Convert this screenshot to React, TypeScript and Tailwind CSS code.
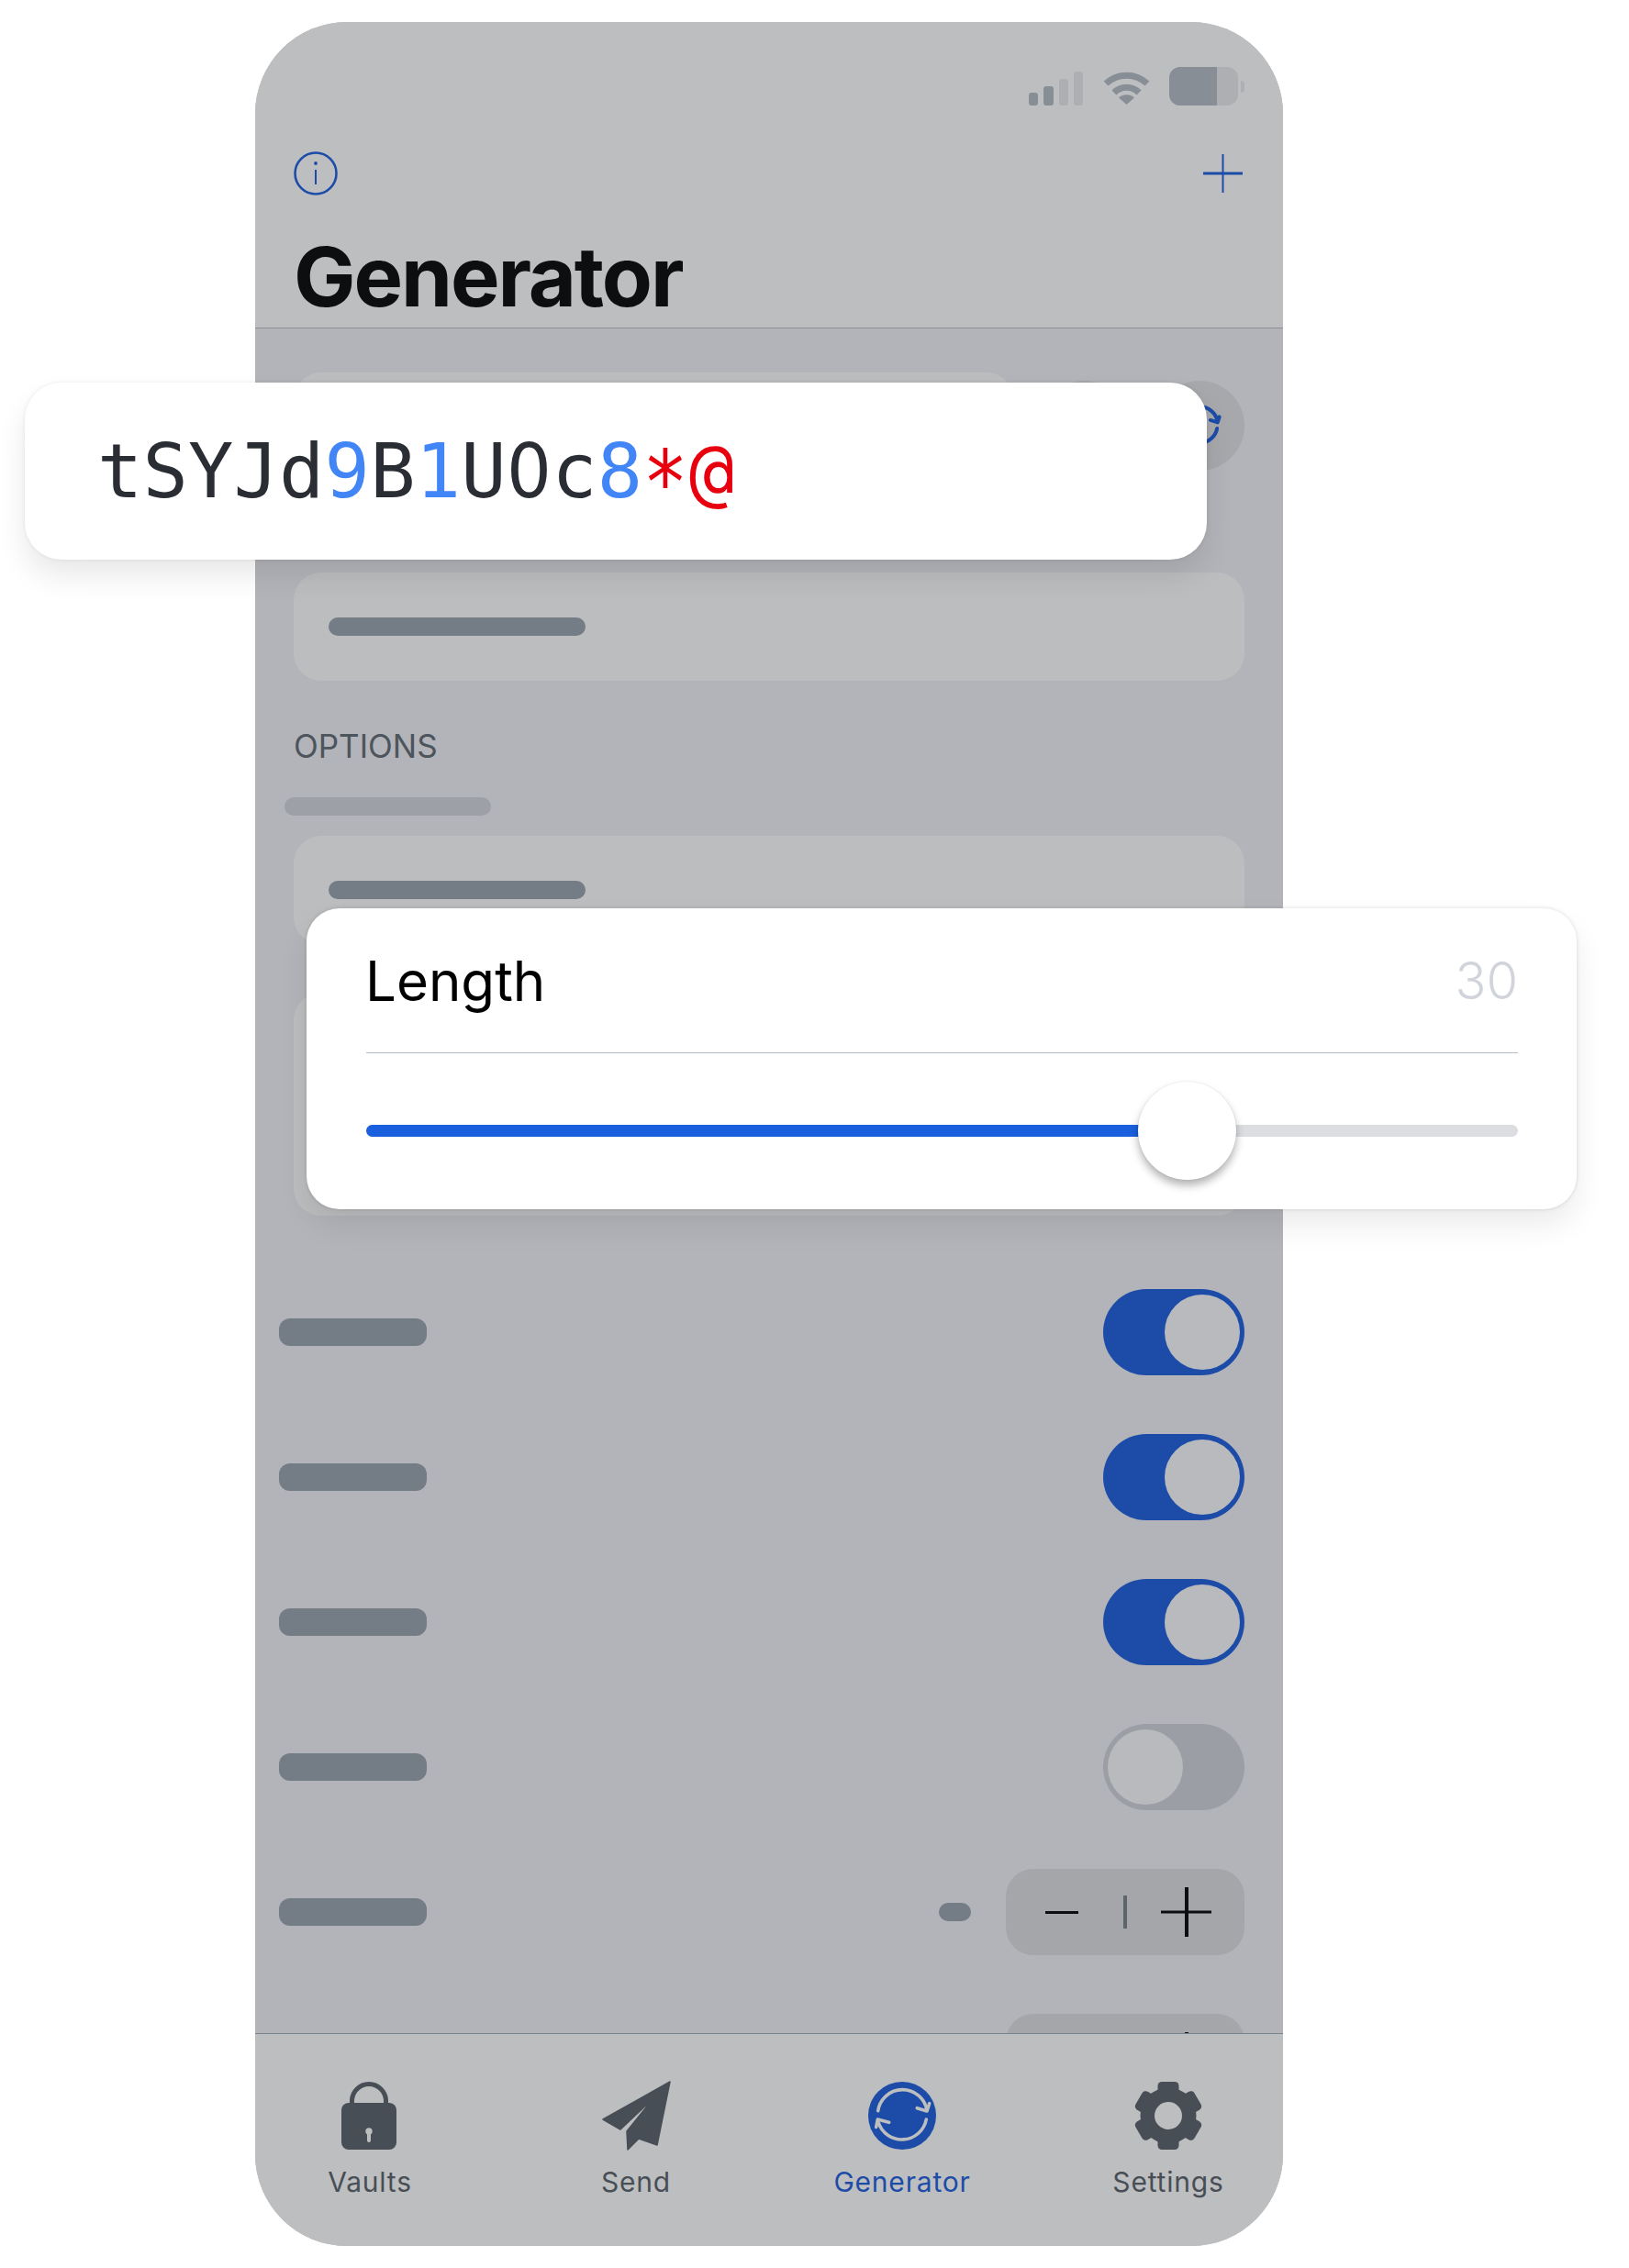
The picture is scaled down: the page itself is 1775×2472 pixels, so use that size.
import React from "react";

const Bar = () => <div className="h-[30px] w-[161px] rounded-[12px] bg-[#747c85]" />;

function Toggle({ on }: { on: boolean }) {
  return (
    <div
      className={
        on
          ? "flex h-[94px] w-[154px] items-center justify-end rounded-full bg-[#1c4ca8] pr-[5px]"
          : "flex h-[94px] w-[154px] items-center justify-start rounded-full bg-[#9c9ea6] pl-[5px]"
      }
    >
      <div className="h-[82px] w-[82px] rounded-full bg-[#b9babd]" />
    </div>
  );
}

function Stepper() {
  return (
    <div className="flex h-[94px] w-[260px] items-center rounded-[30px] bg-[#a5a6aa] pl-[43px]">
      <div className="h-[3px] w-[36px] bg-[#0d0e10]" />
      <div className="ml-[49px] h-[36px] w-[4px] bg-[#5c6569]" />
      <svg className="ml-[37px]" width="55" height="54" viewBox="0 0 55 54">
        <path d="M0 27H55" stroke="#0d0e10" strokeWidth="3" />
        <path d="M28 0V54" stroke="#0d0e10" strokeWidth="4" />
      </svg>
    </div>
  );
}

function SyncArcs({ color, width }: { color: string; width: number }) {
  return (
    <g fill="none" stroke={color} strokeWidth={width} strokeLinecap="round" strokeLinejoin="round">
      <path d="M10.7 31.7A27 27 0 0 1 64 31" />
      <path d="M66.7 23.7L64 32L53.3 28.7" />
      <path d="M63.3 41A27 27 0 0 1 11 44" />
      <path d="M8.7 49.5L10.3 41L22.7 44.3" />
    </g>
  );
}

function Tab({ label, active, children }: { label: string; active?: boolean; children: React.ReactNode }) {
  return (
    <div className="flex w-[150px] flex-col items-center">
      <div className="flex h-[74px] items-center justify-center">{children}</div>
      <span
        className={
          active
            ? "mt-[17px] text-[30px] leading-[36px] tracking-[0.8px] text-[#1c4ca8]"
            : "mt-[17px] text-[30px] leading-[36px] tracking-[0.8px] text-[#484e55]"
        }
      >
        {label}
      </span>
    </div>
  );
}

export default function App() {
  const toggles = [true, true, true, false];
  return (
    <div className="relative h-[2472px] w-[1775px] overflow-hidden bg-white pl-[278px] pt-[24px] [font-family:Inter,sans-serif]">
      <div className="flex h-[2424px] w-[1120px] flex-col overflow-hidden rounded-[100px] bg-[#b3b4b9]">
        {/* Header */}
        <header className="h-[334px] shrink-0 border-b border-[#8e9094] bg-[#bdbec0] pt-[49px]">
          <div className="flex h-[42px] items-center justify-end pr-[42px]">
            <svg width="59" height="37" viewBox="0 0 59 37" className="mt-[4px]">
              <rect x="0" y="23" width="10" height="14" rx="3" fill="#878e96" />
              <rect x="16" y="16" width="11" height="21" rx="3" fill="#878e96" />
              <rect x="33" y="8" width="10" height="29" rx="3" fill="#adafb3" />
              <rect x="49" y="0" width="10" height="37" rx="3" fill="#adafb3" />
            </svg>
            <svg width="51" height="36" viewBox="0 0 51 36" className="ml-[22px] mt-[3px]">
              <path d="M3 13A33 33 0 0 1 48 13" fill="none" stroke="#878e96" strokeWidth="7" />
              <path d="M12 23A19 19 0 0 1 39 23" fill="none" stroke="#878e96" strokeWidth="7" />
              <path d="M25.5 36L17 28.5A13 13 0 0 1 34 28.5Z" fill="#878e96" />
            </svg>
            <div className="ml-[21px] flex h-[42px] w-[75px] overflow-hidden rounded-[12px] bg-[#adafb3]">
              <div className="h-full w-[52px] bg-[#878e96]" />
            </div>
            <div className="ml-[3px] h-[13px] w-[4px] rounded-r-full bg-[#adafb3]" />
          </div>
          <div className="mt-[50px] flex h-[48px] items-center justify-between pl-[42px] pr-[44px]">
            <svg width="48" height="48" viewBox="0 0 48 48" fill="none" stroke="#1c4ca8">
              <circle cx="24" cy="24" r="22.5" strokeWidth="2.6" />
              <circle cx="24" cy="13" r="1.9" fill="#1c4ca8" stroke="none" />
              <path d="M24 20V36" strokeWidth="2" />
            </svg>
            <svg width="43" height="42" viewBox="0 0 43 42" fill="none" stroke="#1c4ca8">
              <path d="M0 21H43" strokeWidth="3" />
              <path d="M21.5 0V42" strokeWidth="2" />
            </svg>
          </div>
          <h1 className="ml-[42px] mt-[37px] text-[90px] font-bold leading-[104px] tracking-[-2.1px] text-[#0d0e10]">Generator</h1>
        </header>

        {/* Scrolling content */}
        <main className="h-[1858px] shrink-0 overflow-hidden">
          <div className="ml-[42px] mt-[48px] flex h-[218px] w-[1036px] items-start">
            <div className="h-[118px] w-[785px] rounded-[30px] bg-[#bcbdbf]" />
            <div className="ml-[27px] mt-[9px] h-[98px] w-[98px] rounded-full bg-[#a7a8ac]" />
            <div className="ml-[28px] mt-[9px] flex h-[98px] w-[98px] items-center justify-center rounded-full bg-[#a7a8ac]">
              <svg width="54" height="54" viewBox="0 0 74 74">
                <SyncArcs color="#1c4ca8" width={5.5} />
              </svg>
            </div>
          </div>
          <div className="ml-[42px] flex h-[118px] w-[1036px] items-center rounded-[30px] bg-[#bcbdbf] pl-[38px]">
            <div className="h-[20px] w-[280px] rounded-[10px] bg-[#747c85]" />
          </div>
          <div className="ml-[42px] mt-[49px] text-[35px] leading-[44px] text-[#4d555c]">OPTIONS</div>
          <div className="ml-[32px] mt-[34px] h-[20px] w-[225px] rounded-[10px] bg-[#9ea0a8]" />
          <div className="ml-[42px] mt-[22px] h-[118px] w-[1036px] rounded-[30px] bg-[#bcbdbf] pl-[38px] pt-[49px]">
            <div className="h-[20px] w-[280px] rounded-[10px] bg-[#747c85]" />
          </div>
          <div className="ml-[42px] mt-[53px] h-[243px] w-[1036px] rounded-[30px] bg-[#bcbdbf]" />

          <div className="mt-[80px] flex flex-col gap-[64px] pl-[26px] pr-[42px]">
            {toggles.map((on, i) => (
              <div key={i} className="flex h-[94px] items-center justify-between">
                <Bar />
                <Toggle on={on} />
              </div>
            ))}
            {[0, 1].map((i) => (
              <div key={i} className="flex h-[94px] items-center">
                <Bar />
                <div className="ml-auto mr-[38px] h-[20px] w-[35px] rounded-[10px] bg-[#747c85]" />
                <Stepper />
              </div>
            ))}
          </div>
        </main>

        {/* Tab bar */}
        <nav className="flex flex-1 justify-between border-t border-[#7b848c] bg-[#bdbec0] px-[50px] pt-[52px]">
          <Tab label="Vaults">
            <svg className="-ml-[3px]" width="60" height="74" viewBox="0 0 60 74">
              <path d="M11.5 25V21A18.5 18.5 0 0 1 48.5 21V25" fill="none" stroke="#484e55" strokeWidth="5" />
              <rect x="0" y="23" width="60" height="51" rx="8" fill="#484e55" />
              <circle cx="30" cy="54" r="3.7" fill="#bdbec0" />
              <rect x="28" y="54" width="4" height="12" rx="2" fill="#bdbec0" />
            </svg>
          </Tab>
          <Tab label="Send">
            <svg width="75" height="76" viewBox="0 0 75 76">
              <path
                d="M74 1L1 42L20 53L56 19L27 55L28 75L40 63L60 70Z"
                fill="#484e55"
                stroke="#484e55"
                strokeWidth="1.5"
                strokeLinejoin="round"
              />
            </svg>
          </Tab>
          <Tab label="Generator" active>
            <svg width="74" height="74" viewBox="0 0 74 74">
              <circle cx="37" cy="37" r="37" fill="#1c4ca8" />
              <SyncArcs color="#bdbec0" width={3.6} />
            </svg>
          </Tab>
          <Tab label="Settings">
            <svg width="74" height="74" viewBox="0 0 74 74">
              <circle cx="37" cy="37" r="30.5" fill="#484e55" />
              {[0, 60, 120, 180, 240, 300].map((a) => (
                <rect key={a} x="25.5" y="0" width="23" height="16" rx="4.5" fill="#484e55" transform={`rotate(${a} 37 37)`} />
              ))}
              <circle cx="37" cy="37" r="15" fill="#bdbec0" />
            </svg>
          </Tab>
        </nav>
      </div>

      {/* Floating password card */}
      <div className="absolute left-[27px] top-[417px] flex h-[193px] w-[1288px] items-center rounded-[40px] bg-white pl-[79px] text-[82px] leading-none tracking-[0.15px] text-[#2a2d33] shadow-[0_0_4px_rgba(0,0,0,0.08),0_18px_32px_rgba(0,0,0,0.09)] [font-family:'DejaVu_Sans_Mono',monospace]">
        <span>tSYJd</span>
        <span className="text-[#4285f7]">9</span>
        <span>B</span>
        <span className="text-[#4285f7]">1</span>
        <span>U</span>
        <span className="inline-block w-[49.5px] scale-y-[1.06] text-center text-[77px] [font-family:'DejaVu_Sans',sans-serif]">0</span>
        <span>c</span>
        <span className="text-[#4285f7]">8</span>
        <span className="inline-block translate-y-[13px] scale-y-[1.18] text-[#e8000f]">*</span>
        <span className="ml-[1px] text-[#e8000f]">@</span>
      </div>

      {/* Floating length card */}
      <div className="absolute left-[334px] top-[990px] h-[328px] w-[1384px] rounded-[36px] bg-white pl-[65px] pr-[64px] shadow-[0_0_4px_rgba(0,0,0,0.14),0_18px_32px_rgba(0,0,0,0.08)]">
        <div className="flex h-[158px] items-center justify-between border-b border-[#b4bcc4]">
          <span className="-ml-[1px] text-[60px] leading-none text-black">Length</span>
          <span className="text-[56px] font-light leading-none text-[#d1d5db]">30</span>
        </div>
        <div className="relative mt-[78px] h-[13px] w-full rounded-full bg-[#dcdde0]">
          <div className="h-full w-[890px] rounded-l-full bg-[#1a60de]" />
          <div className="absolute left-[841px] top-[-47px] h-[107px] w-[107px] rounded-full bg-white shadow-[0_6px_10px_rgba(0,0,0,0.3),0_0_2px_rgba(0,0,0,0.1)]" />
        </div>
      </div>
    </div>
  );
}
